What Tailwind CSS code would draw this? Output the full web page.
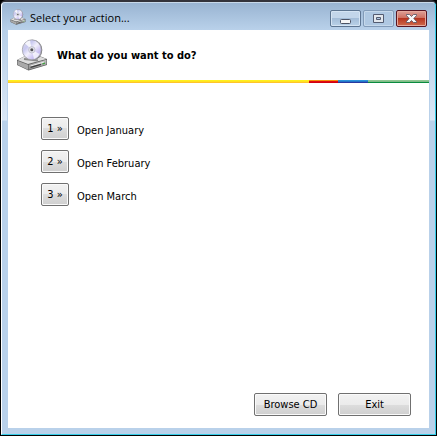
<!DOCTYPE html>
<html lang="en">
<head>
  <meta charset="UTF-8" />
  <meta name="viewport" content="width=device-width, initial-scale=1.0"/>
  <title>Select your action...</title>
  <script src="https://cdn.jsdelivr.net/npm/@tailwindcss/browser@4"></script>
</head>
<body class="bg-black font-['DejaVu_Sans_Condensed','DejaVu_Sans',sans-serif] text-[11px] leading-4 text-black">

  <!-- Shared drawing: disc standing on a drive -->
  <svg class="absolute size-0" aria-hidden="true">
    <defs>
      <linearGradient id="disc" x1="0" y1="0" x2="1" y2="1">
        <stop offset="0" stop-color="#dcdce6"/>
        <stop offset=".3" stop-color="#c8c8f0"/>
        <stop offset=".5" stop-color="#f3f1fc"/>
        <stop offset=".75" stop-color="#c6bcf2"/>
        <stop offset="1" stop-color="#e2e2e8"/>
      </linearGradient>
      <linearGradient id="front" x1="0" y1="0" x2="0" y2="1">
        <stop offset="0" stop-color="#c4c4c4"/>
        <stop offset="1" stop-color="#8c8c8c"/>
      </linearGradient>
    </defs>
    <symbol id="drive" viewBox="0 0 32 32">
      <path d="M1 21 L9 17 L21 16 L31 20 V26 L12.500 31.500 L1 26 Z" fill="#5c5c5c"/>
      <path d="M1.500 21 L9 17 L21 16.500 L30.500 20 L12 25 Z" fill="#dedede"/>
      <path d="M1.500 21.800 L12 25.800 V30.800 L1.500 25.700 Z" fill="#a9a9a9"/>
      <path d="M12.600 25.800 L30.500 20.800 V25.500 L12.600 30.700 Z" fill="url(#front)"/>
      <path d="M14.500 27 L28 23" stroke="#efefef" stroke-width="1"/>
      <path d="M14.500 28.300 L25 25.300" stroke="#3c3c3c" stroke-width="1.300"/>
      <path d="M26.500 24.800 L29 24.100" stroke="#3fa53f" stroke-width="1.200"/>
      <path d="M8 20 L22 21.500" stroke="#8a8a8a" stroke-width="2"/>
      <ellipse cx="16.700" cy="11" rx="9.600" ry="10.200" fill="#77777c"/>
      <ellipse cx="15.800" cy="10.800" rx="9.500" ry="10" fill="url(#disc)" stroke="#a2a2a8" stroke-width=".8"/>
      <path d="M15.800 10.800 L9 4.500 A9 9 0 0 1 14 1.500 Z" fill="#fff" opacity=".8"/>
      <path d="M15.800 10.800 L23.500 15 A9 9 0 0 1 18 20 Z" fill="#fff" opacity=".7"/>
      <circle cx="15.800" cy="10.800" r="3.200" fill="#e2e2ea" stroke="#b4b4c4" stroke-width=".7"/>
      <circle cx="15.800" cy="10.800" r="1.500" fill="#505055"/>
    </symbol>
  </svg>

  <!-- Window frame -->
  <div class="flex min-h-screen flex-col rounded-t-md border-b border-l border-r border-t-2 border-black border-t-[#33333b] bg-[#b9d1ea]">
    <div class="flex grow flex-col rounded-t-sm border border-[#35cde8] border-l-white border-t-[#c8d9ea] bg-[linear-gradient(#9ab5d3,#b7cfe8_27px,#dae7f5_117px,#b9d1ea_118px)] px-[5px] pb-[5px]">

      <!-- Title bar -->
      <header class="flex h-[27px] items-center bg-[linear-gradient(#99b4d2,#b9d1ea)] pl-[3px]">
        <svg class="size-4"><use href="#drive"/></svg>
        <h1 class="grow pl-1 pt-[3px] font-['Open_Sans','Noto_Sans',sans-serif]">Select your action...</h1>
        <div class="flex gap-[2px] self-end pb-[3px] pr-[3px]">
          <button type="button" aria-label="Minimize" class="flex h-[17px] w-[31px] items-center justify-center rounded-xs border border-[#5d7591] bg-[linear-gradient(#c3d6ea_50%,#a4bdd8_50%,#bad2e8)] shadow-[inset_0_0_0_1px_#d5e4f3]">
            <svg class="h-3 w-[11px]" viewBox="0 0 11 12"><rect x=".5" y="6.500" width="10" height="4" rx="1" fill="#f6f6f6" stroke="#4c5364"/></svg>
          </button>
          <button type="button" aria-label="Maximize" disabled class="flex h-[17px] w-[31px] items-center justify-center rounded-xs border border-[#829bb8] bg-[#afc8e2] shadow-[inset_0_0_0_1px_#c5d8eb]">
            <svg class="h-[9px] w-[11px]" viewBox="0 0 11 9"><path d="M.5 .5 H10.500 V8.500 H.5 Z M3.500 3.500 H7.500 V5.500 H3.500 Z" fill="#e2e7ed" fill-rule="evenodd" stroke="#535b70"/></svg>
          </button>
          <button type="button" aria-label="Close" class="flex h-[17px] w-[31px] items-center justify-center rounded-xs border border-[#581522] bg-[linear-gradient(#dea198,#cd6b5b_50%,#b73520_50%,#cf6b4c)] shadow-[inset_0_0_0_1px_#e6a99c]">
            <svg class="h-[9px] w-[11px]" viewBox="0 0 11 9"><path d="M.5 .5 H3.500 L5.500 2.500 L7.500 .5 H10.500 V1.500 L7.800 4.500 L10.500 7.500 V8.500 H7.500 L5.500 6.500 L3.500 8.500 H.5 V7.500 L3.200 4.500 L.5 1.500 Z" fill="#f8f8f8" stroke="#4f5162" stroke-width=".8"/></svg>
          </button>
        </div>
      </header>

      <main class="flex grow flex-col border-x border-b border-[#b9d1ea] bg-white">
        <!-- Question -->
        <div class="flex h-[50px] items-center gap-[9px] pl-2">
          <svg class="size-8"><use href="#drive"/></svg>
          <h2 class="pt-[2px] font-bold">What do you want to do?</h2>
        </div>

        <!-- Colour stripe -->
        <div class="flex h-[3px]">
          <div class="grow bg-[linear-gradient(#fff01e_33%,#ffe321_33%_66%,#ffc42a_66%)]"></div>
          <div class="w-[29px] bg-[linear-gradient(#f29111_33%,#e20a10_33%_66%,#d1000f_66%)]"></div>
          <div class="w-[30px] bg-[linear-gradient(#2b93dc_33%,#2473c6_33%_66%,#2838a0_66%)]"></div>
          <div class="w-[61px] bg-[linear-gradient(#90c795_33%,#80bd88_33%_66%,#098b3f_66%)]"></div>
        </div>

        <!-- Actions -->
        <ul class="grow space-y-[10px] pl-[33px] pt-[34px]">
          <li class="flex items-center gap-2">
            <button type="button" id="open-1" aria-labelledby="label-1" class="h-[23px] w-7 rounded-xs border border-[#707070] bg-[linear-gradient(#f2f2f2,#ebebeb_50%,#dddddd_50%,#cfcfcf)] shadow-[inset_0_0_0_1px_#fafafa]">1 »</button>
            <label id="label-1" for="open-1" class="pt-1">Open January</label>
          </li>
          <li class="flex items-center gap-2">
            <button type="button" id="open-2" aria-labelledby="label-2" class="h-[23px] w-7 rounded-xs border border-[#707070] bg-[linear-gradient(#f2f2f2,#ebebeb_50%,#dddddd_50%,#cfcfcf)] shadow-[inset_0_0_0_1px_#fafafa]">2 »</button>
            <label id="label-2" for="open-2" class="pt-1">Open February</label>
          </li>
          <li class="flex items-center gap-2">
            <button type="button" id="open-3" aria-labelledby="label-3" class="h-[23px] w-7 rounded-xs border border-[#707070] bg-[linear-gradient(#f2f2f2,#ebebeb_50%,#dddddd_50%,#cfcfcf)] shadow-[inset_0_0_0_1px_#fafafa]">3 »</button>
            <label id="label-3" for="open-3" class="pt-1">Open March</label>
          </li>
        </ul>

        <!-- Bottom buttons -->
        <footer class="flex justify-end gap-[11px] pb-3 pr-[18px]">
          <button type="button" class="h-[23px] w-[73px] rounded-xs border border-[#707070] bg-[linear-gradient(#f2f2f2,#ebebeb_50%,#dddddd_50%,#cfcfcf)] shadow-[inset_0_0_0_1px_#fafafa]">Browse CD</button>
          <button type="button" class="h-[23px] w-[73px] rounded-xs border border-[#707070] bg-[linear-gradient(#f2f2f2,#ebebeb_50%,#dddddd_50%,#cfcfcf)] shadow-[inset_0_0_0_1px_#fafafa]">Exit</button>
        </footer>
      </main>
    </div>
  </div>

</body>
</html>
